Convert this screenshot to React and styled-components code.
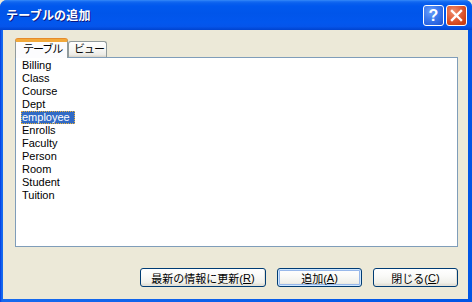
import React from "react";
import styled, { createGlobalStyle } from "styled-components";

const Global = createGlobalStyle`
  html, body { margin: 0; padding: 0; width: 472px; height: 302px; overflow: hidden; background: #ECE9D8; }
  #root { width: 472px; height: 302px; }
`;

const JP = `"Liberation Sans", "Noto Sans CJK JP", sans-serif`;

const Frame = styled.div`
  width: 472px;
  height: 302px;
  box-sizing: border-box;
  display: flex;
  flex-direction: column;
  background: linear-gradient(to right, #0831D9 0, #0A5AEE 1px, #166AEE 2px, #0055E5 100%);
  border-radius: 7px 7px 0 0;
  overflow: hidden;
`;

const TitleBar = styled.div`
  height: 30px;
  flex: none;
  display: flex;
  align-items: center;
  padding: 0 5px 0 6px;
  background: linear-gradient(to bottom, #3B8DF7 0, #1C73F5 1px, #0A60EE 3px, #0058EE 6px, #0055EA 45%, #0257EE 75%, #0555EB 88%, #0043CF 100%);
`;

const Title = styled.div`
  flex: 1;
  color: #fff;
  font-family: ${JP};
  font-weight: bold;
  font-size: 12px;
  letter-spacing: 0.2px;
  text-shadow: 1px 1px 0 #0A1883;
  padding-bottom: 1px;
`;

const Caps = styled.div`
  display: flex;
  gap: 2px;
  padding-top: 1px;
`;

const CapButton = styled.div`
  width: 21px;
  height: 21px;
  box-sizing: border-box;
  border: 1px solid #fff;
  border-radius: 3px;
  display: flex;
  align-items: center;
  justify-content: center;
  color: #fff;
  font-family: "Liberation Sans", sans-serif;
  font-weight: bold;
  font-size: 16px;
  background: ${(p) =>
    p.$kind === "close"
      ? "radial-gradient(circle at 35% 30%, #F0906E 0, #E2613C 40%, #D14216 75%, #C23A12 100%)"
      : "radial-gradient(circle at 35% 30%, #6C9EFA 0, #3F7CEE 40%, #2A63E0 75%, #1D50CB 100%)"};
`;

const Client = styled.div`
  flex: 1;
  margin: 0 4px 3px 3px;
  background: #ECE9D8;
  display: flex;
  flex-direction: column;
  padding: 10px 10px 0 12px;
`;

const TabRow = styled.div`
  display: flex;
  align-items: flex-end;
  height: 18px;
  margin-bottom: -1px;
`;

const Tab = styled.div`
  position: relative;
  z-index: ${(p) => (p.$active ? 2 : 1)};
  box-sizing: border-box;
  width: ${(p) => p.$w}px;
  height: ${(p) => (p.$active ? 19 : 16)}px;
  margin-bottom: ${(p) => (p.$active ? 0 : 1)}px;
  border: 1px solid #919B9C;
  border-bottom: none;
  border-radius: 3px 3px 0 0;
  border-top: ${(p) => (p.$active ? "3px solid #F2A93B" : "1px solid #919B9C")};
  box-shadow: ${(p) => (p.$active ? "inset 0 -0px 0 #fff, 0 -1px 0 #E68B2C" : "none")};
  background: ${(p) =>
    p.$active ? "#FCFCFE" : "linear-gradient(to bottom, #FFFFFF 0, #F7F7F4 50%, #ECEBE6 85%, #D8D2C6 100%)"};
  font-family: ${JP};
  font-size: 11px;
  letter-spacing: -1px;
  line-height: ${(p) => (p.$active ? 14 : 14)}px;
  color: #000;
  padding-left: ${(p) => (p.$active ? 7 : 5)}px;
  white-space: nowrap;
`;

const Panel = styled.div`
  box-sizing: border-box;
  height: 190px;
  border: 1px solid #7F9DB9;
  background: #fff;
  padding: 1px 0 0 5px;
  display: flex;
  flex-direction: column;
`;

const Item = styled.div`
  height: 13px;
  line-height: 13px;
  font-family: "Liberation Sans", sans-serif;
  font-size: 11px;
  color: #000;
`;

const ItemText = styled.span`
  display: inline-block;
  height: 13px;
  padding: 0 5px 0 1px;
  box-sizing: border-box;
  background: ${(p) => (p.$sel ? "#316AC5" : "transparent")};
  color: ${(p) => (p.$sel ? "#fff" : "#000")};
  outline: ${(p) => (p.$sel ? "1px dotted #E9B03C" : "none")};
  outline-offset: -1px;
`;

const ButtonRow = styled.div`
  display: flex;
  justify-content: flex-end;
  gap: 11px;
  margin-top: 21px;
`;

const Button = styled.div`
  box-sizing: border-box;
  width: ${(p) => p.$w}px;
  height: 19px;
  border: 1px solid #003C74;
  border-radius: 3px;
  background: linear-gradient(to bottom, #FFFFFF 0, #FAFAF8 40%, #F0F0EA 80%, #DCD8CC 100%);
  box-shadow: ${(p) =>
    p.$default ? "inset 0 0 0 1px #CEE7FF, inset 0 0 0 2px #98B8EA" : "inset -1px -1px 0 #E3E2DA"};
  display: flex;
  align-items: center;
  justify-content: center;
  font-family: ${JP};
  font-size: 11px;
  color: #000;
  white-space: nowrap;
`;

const U = styled.span`
  text-decoration: underline;
`;

const items = ["Billing", "Class", "Course", "Dept", "employee", "Enrolls", "Faculty", "Person", "Room", "Student", "Tuition"];

export default function App() {
  return (
    <>
      <Global />
      <Frame>
        <TitleBar>
          <Title>テーブルの追加</Title>
          <Caps>
            <CapButton $kind="help">?</CapButton>
            <CapButton $kind="close">
              <svg width="13" height="13" viewBox="0 0 13 13">
                <path d="M2 2 L11 11 M11 2 L2 11" stroke="#fff" strokeWidth="2.4" strokeLinecap="square" />
              </svg>
            </CapButton>
          </Caps>
        </TitleBar>
        <Client>
          <TabRow>
            <Tab $active $w={53}>テーブル</Tab>
            <Tab $w={39}>ビュー</Tab>
          </TabRow>
          <Panel>
            {items.map((t) => (
              <Item key={t}>
                <ItemText $sel={t === "employee"}>{t}</ItemText>
              </Item>
            ))}
          </Panel>
          <ButtonRow>
            <Button $w={126}>最新の情報に更新(<U>R</U>)</Button>
            <Button $w={85} $default>追加(<U>A</U>)</Button>
            <Button $w={85}>閉じる(<U>C</U>)</Button>
          </ButtonRow>
        </Client>
      </Frame>
    </>
  );
}
